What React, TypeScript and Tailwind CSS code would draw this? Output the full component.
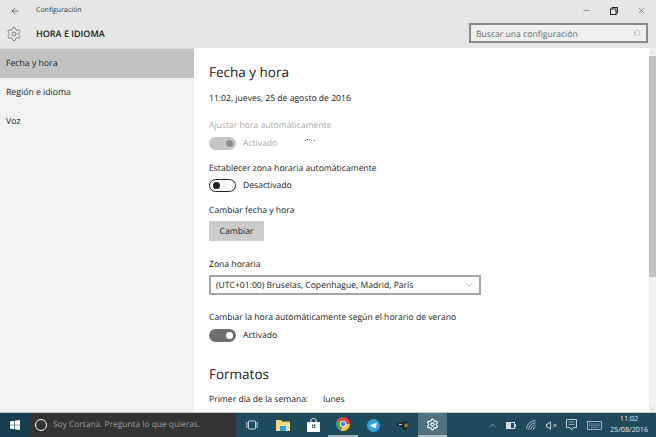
import { ArrowLeft, ChevronDown, ChevronUp, Minus, Search, Settings, X } from 'lucide-react';

const font = { fontFamily: '"Open Sans", sans-serif' };

function Toggle({ on, disabled, label }: { on: boolean; disabled?: boolean; label: string }) {
    const track = disabled
        ? 'bg-[#c6c6c6] justify-end'
        : on
          ? 'bg-[#6e6e6e] justify-end'
          : 'bg-white border-[1.5px] border-[#222] justify-start';
    return (
        <div className="flex items-center gap-[7px] h-[13px]">
            <div className={`w-[27px] h-[13px] rounded-full flex items-center px-[3px] ${track}`}>
                <div className={`w-[7px] h-[7px] rounded-full ${disabled ? 'bg-[#8f8f8f]' : on ? 'bg-white' : 'bg-[#222]'}`} />
            </div>
            <span className={`text-[8.6px] leading-[13px] ${disabled ? 'text-[#a8a8a8]' : 'text-[#222]'}`}>{label}</span>
        </div>
    );
}

function Label({ children, muted }: { children: string; muted?: boolean }) {
    return <div className={`text-[8.6px] leading-[13px] ${muted ? 'text-[#a8a8a8]' : 'text-[#222]'}`}>{children}</div>;
}

function WindowsLogo() {
    return (
        <svg width="10" height="10" viewBox="0 0 10 10" fill="#fff">
            <path d="M0 1.4 4.4.8v3.9H0zM5 .7 10 0v4.7H5zM0 5.3h4.4v3.9L0 8.6zM5 5.3h5V10L5 9.3z" />
        </svg>
    );
}

function TaskView() {
    return (
        <svg width="14" height="10" viewBox="0 0 14 10" fill="none" stroke="#c9d3d8" strokeWidth="1">
            <rect x="3.5" y="1" width="7" height="8" rx="0.5" />
            <path d="M1 2.5h1v5H1M13 2.5h-1v5h1" />
        </svg>
    );
}

function Explorer() {
    return (
        <svg width="14" height="12" viewBox="0 0 14 12">
            <path d="M0 1h5l1 1.5h8V12H0z" fill="#f3cf6b" />
            <rect x="0" y="4" width="14" height="8" fill="#f8dc85" />
            <rect x="4" y="7" width="6" height="5" fill="#2aa4dc" />
        </svg>
    );
}

function Store() {
    return (
        <svg width="13" height="14" viewBox="0 0 13 14">
            <path d="M4 4V2.2C4 1 5 .5 6.5.5S9 1 9 2.2V4" fill="none" stroke="#fff" strokeWidth="1" />
            <path d="M0 4h13v10H0z" fill="#fff" />
            <path d="M5 6.5h1.4v1.4H5zM7 6.5h1.4v1.4H7zM5 8.5h1.4v1.4H5zM7 8.5h1.4v1.4H7z" fill="#1f4a5c" />
        </svg>
    );
}

function Chrome() {
    return (
        <svg width="14" height="14" viewBox="0 0 14 14">
            <circle cx="7" cy="7" r="7" fill="#e0483c" />
            <path d="M7 7 1 3.6A7 7 0 0 0 5 13.7z" fill="#3ba55a" />
            <path d="M7 7h7a7 7 0 0 1-9 6.7z" fill="#f6c83f" />
            <circle cx="7" cy="7" r="3.2" fill="#fff" />
            <circle cx="7" cy="7" r="2.4" fill="#4b87ec" />
        </svg>
    );
}

function Telegram() {
    return (
        <svg width="13" height="13" viewBox="0 0 13 13">
            <circle cx="6.5" cy="6.5" r="6.5" fill="#2ea3dc" />
            <path d="M2.8 6.6 9.8 3.6 8.8 9.6 6.6 8 5.6 9.2 5.4 7.4z" fill="#fff" />
        </svg>
    );
}

function Bug() {
    return (
        <svg width="14" height="9" viewBox="0 0 14 9">
            <path d="M0 3 4 2 7 1l4-1 1 2-1 6-3 1-2-3-3-1z" fill="#26231d" />
            <path d="M8 3l3-1 1 3-3 2z" fill="#8a7a45" />
            <path d="M3 3h3v1H3z" fill="#d8d8d8" />
        </svg>
    );
}

function Tray() {
    return (
        <div className="flex items-center shrink-0 text-[#d5dde0]">
            <ChevronUp size={11} strokeWidth={1.2} className="ml-[40px]" />
            <svg width="10" height="7" viewBox="0 0 10 7" className="ml-[8px]">
                <rect x="0.5" y="0.5" width="8" height="6" fill="none" stroke="#d5dde0" />
                <rect x="1" y="1" width="4" height="5" fill="#d5dde0" />
                <rect x="9" y="2" width="1" height="3" fill="#d5dde0" />
            </svg>
            <svg width="10" height="10" viewBox="0 0 10 10" fill="none" stroke="#aab8be" strokeWidth="1" className="ml-[10px]">
                <path d="M.5 9.5A9 9 0 0 1 9.5.5M2.8 9.5A6.7 6.7 0 0 1 9.5 2.8M5 9.5A4.5 4.5 0 0 1 9.5 5M7.2 9.5a2.3 2.3 0 0 1 2.3-2.3" />
            </svg>
            <svg width="12" height="9" viewBox="0 0 12 9" fill="none" stroke="#d5dde0" strokeWidth="0.9" className="ml-[10px]">
                <path d="M.5 3h1.5L4.5.8v7.4L2 6H.5z" />
                <path d="M7.5 3l3 3M10.5 3l-3 3" />
            </svg>
            <svg width="11" height="12" viewBox="0 0 11 12" fill="none" stroke="#d5dde0" strokeWidth="0.9" className="ml-[8px]">
                <path d="M.5.5h10v8H7L5.5 11 4 8.5H.5z" />
                <path d="M2.5 3h6M2.5 5.5h6" strokeWidth="0.6" />
            </svg>
            <svg width="15" height="9" viewBox="0 0 15 9" fill="none" stroke="#d5dde0" strokeWidth="0.7" className="ml-[10px]">
                <rect x="0.5" y="0.5" width="14" height="8" />
                <path d="M2 3h11M2 4.7h11M4 6.5h7" strokeDasharray="1 .7" strokeWidth="0.6" />
            </svg>
            <div className="w-[54px] shrink-0 text-center text-[7.2px] leading-[11px] text-[#e6ecee]">
                <div>11:02</div>
                <div>25/08/2016</div>
            </div>
        </div>
    );
}

export default function App() {
    return (
        <div className="w-[656px] h-[437px] flex flex-col overflow-hidden bg-white text-[#222] [text-rendering:geometricPrecision]" style={font}>
            <header className="h-[48px] shrink-0 bg-[#e6e6e6] flex flex-col">
                <div className="h-[20px] flex items-center pt-[1px]">
                    <ArrowLeft size={10} strokeWidth={1.3} className="ml-[10px] text-[#222]" />
                    <span className="ml-[16px] mt-[1px] text-[7px] leading-[10px] text-[#333]">Configuración</span>
                    <div className="ml-auto flex items-center gap-[19px] mr-[10px]">
                        <Minus size={9} strokeWidth={1.2} className="text-[#333]" />
                        <svg width="8" height="8" viewBox="0 0 8 8" fill="none" stroke="#222" strokeWidth="1">
                            <rect x="0.5" y="2" width="5.5" height="5.5" />
                            <path d="M2 2V.5h5.5V6H6" />
                        </svg>
                        <X size={9} strokeWidth={1.2} className="text-[#333]" />
                    </div>
                </div>
                <div className="h-[28px] flex items-center">
                    <Settings size={16} strokeWidth={0.9} className="ml-[6px] text-[#444]" />
                    <span className="ml-[14px] text-[9px] font-semibold text-[#222]">HORA E IDIOMA</span>
                    <div className="ml-auto mr-[8px] mt-[-2px] w-[179px] h-[20px] bg-[#f0f0f0] border-2 border-[#8a8a8a] flex items-center px-[5px]">
                        <span className="mt-[1px] text-[8.6px] leading-[12px] text-[#666]">Buscar una configuración</span>
                        <Search size={8} strokeWidth={1} className="ml-auto text-[#777] -scale-x-100" />
                    </div>
                </div>
            </header>

            <div className="flex-1 min-h-0 flex">
                <aside className="w-[194px] shrink-0 bg-[#f2f2f2] text-[8.7px]">
                    <div className="h-[30px] bg-[#c2c2c2] flex items-center pl-[6px] pt-[1px] border-t border-[#d8d8d8]">Fecha y hora</div>
                    <div className="h-[29px] flex items-center pl-[6px] pt-[1px]">Región e idioma</div>
                    <div className="h-[29px] flex items-center pl-[6px] pt-[1px]">Voz</div>
                </aside>

                <main className="flex-1 min-w-0 pl-[15px] overflow-hidden">
                    <h1 className="mt-[14px] text-[13.5px] leading-[20px] text-[#222]">Fecha y hora</h1>
                    <div className="mt-[10px] text-[8.6px] leading-[13px]">11:02, jueves, 25 de agosto de 2016</div>

                    <div className="mt-[14px]">
                        <Label muted>Ajustar hora automáticamente</Label>
                    </div>
                    <div className="mt-[5px] relative">
                        <Toggle on disabled label="Activado" />
                        <div className="absolute left-[96px] top-[2px] flex gap-[1px]">
                            <div className="w-[1px] h-[1px] mt-[1px] bg-[#444]" />
                            <div className="w-[1px] h-[1px] bg-[#444]" />
                            <div className="w-[1px] h-[1px] bg-[#777]" />
                            <div className="w-[1px] h-[1px] ml-[3px] mt-[1px] bg-[#555]" />
                        </div>
                    </div>

                    <div className="mt-[12px]">
                        <Label>Establecer zona horaria automáticamente</Label>
                    </div>
                    <div className="mt-[4px]">
                        <Toggle on={false} label="Desactivado" />
                    </div>

                    <div className="mt-[12px]">
                        <Label>Cambiar fecha y hora</Label>
                    </div>
                    <div className="mt-[4px] w-[55px] h-[20px] bg-[#cccccc] flex items-center justify-center text-[8.6px]">Cambiar</div>

                    <div className="mt-[17px]">
                        <Label>Zona horaria</Label>
                    </div>
                    <div className="mt-[4px] w-[272px] h-[20px] border-2 border-[#a6a6a6] flex items-center pl-[5px] pr-[5px] text-[8.6px]">
                        <span>(UTC+01:00) Bruselas, Copenhague, Madrid, París</span>
                        <ChevronDown size={10} strokeWidth={1} className="ml-auto text-[#555]" />
                    </div>

                    <div className="mt-[16px]">
                        <Label>Cambiar la hora automáticamente según el horario de verano</Label>
                    </div>
                    <div className="mt-[5px]">
                        <Toggle on label="Activado" />
                    </div>

                    <h2 className="mt-[22px] text-[13.5px] leading-[20px]">Formatos</h2>
                    <div className="mt-[9px] flex text-[8.6px] leading-[13px]">
                        <span className="w-[114px] shrink-0">Primer día de la semana:</span>
                        <span>lunes</span>
                    </div>
                </main>

                <div className="w-[7px] shrink-0 bg-[#f2f2f2] flex flex-col items-center">
                    <ChevronUp size={7} strokeWidth={1} className="mt-[1px] text-[#777]" />
                    <div className="w-full h-[221px] bg-[#c2c2c2]" />
                    <ChevronDown size={7} strokeWidth={1} className="mt-auto text-[#777]" />
                </div>
            </div>

            <footer className="h-[25px] shrink-0 bg-[#1f4a5c] flex items-center border-t border-[#c8c8c8]">
                <div className="w-[29px] h-full shrink-0 bg-[#153e50] flex items-center justify-center">
                    <WindowsLogo />
                </div>
                <div className="w-[207px] h-full shrink-0 bg-[#333333] flex items-center">
                    <div className="ml-[6px] w-[12px] h-[12px] rounded-full border-[1.5px] border-white" />
                    <span className="ml-[6px] text-[8.4px] text-[#9a9a9a]">Soy Cortana. Pregunta lo que quieras.</span>
                </div>
                <div className="flex items-center h-full shrink-0">
                    <div className="w-[32px] flex justify-center"><TaskView /></div>
                    <div className="w-[30px] flex justify-center"><Explorer /></div>
                    <div className="w-[30px] flex justify-center"><Store /></div>
                    <div className="w-[30px] h-full flex items-center justify-center border-b-2 border-[#9fb0b8]"><Chrome /></div>
                    <div className="w-[30px] flex justify-center"><Telegram /></div>
                    <div className="w-[30px] flex justify-center"><Bug /></div>
                    <div className="w-[29px] h-full bg-[#4f7180] flex items-center justify-center border-b-2 border-[#a9bac1]">
                        <Settings size={13} strokeWidth={2} className="text-white" />
                    </div>
                </div>
                <Tray />
            </footer>
        </div>
    );
}
